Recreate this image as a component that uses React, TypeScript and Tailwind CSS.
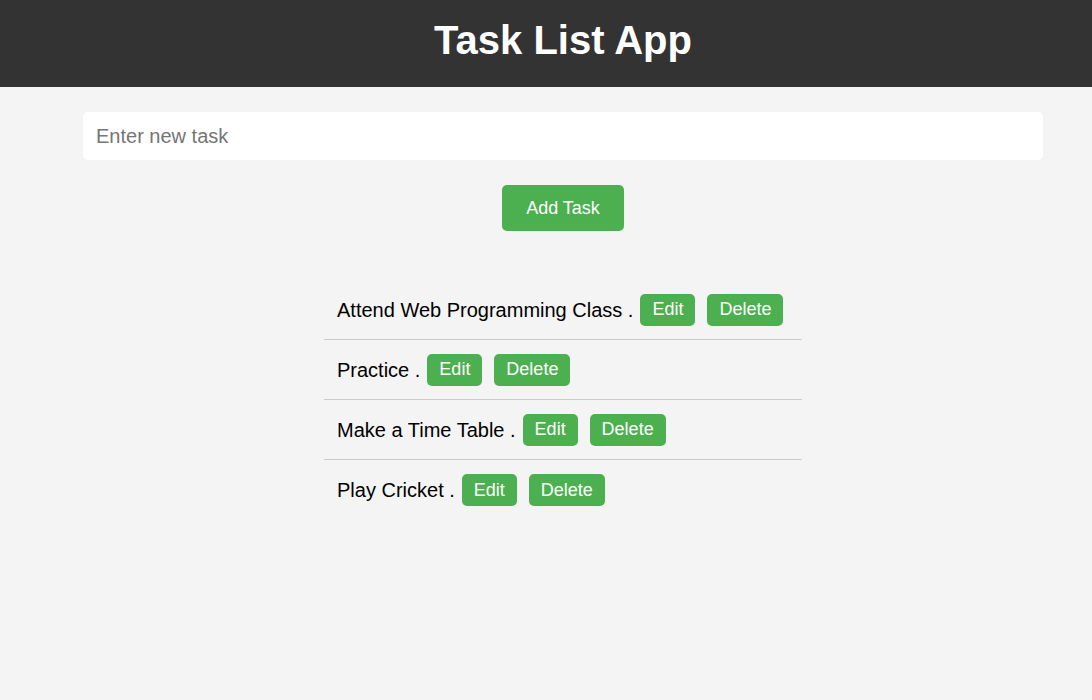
import { useState } from "react";

const initialTasks = [
  "Attend Web Programming Class",
  "Practice",
  "Make a Time Table",
  "Play Cricket",
];

export default function App() {
  const [tasks] = useState(initialTasks);

  return (
    <div className="min-h-[700px] bg-[#f4f4f4] font-['Liberation_Sans',Arial,sans-serif] text-black">
      {/* Header */}
      <header className="flex h-[87px] items-center bg-[#333333] pb-[7px] pl-[34px]">
        <h1 className="w-full text-center text-[40px] font-bold leading-none text-white">
          Task List App
        </h1>
      </header>

      <div className="flex flex-col items-center pl-[34px]">
        <input
          type="text"
          placeholder="Enter new task"
          className="mt-[25px] h-[48px] w-[960px] rounded-[5px] bg-white px-[13px] text-[20px] outline-none placeholder:text-[#757575]"
        />

        <button className="mt-[25px] h-[46px] w-[122px] rounded-[5px] bg-[#4caf50] text-[18px] text-white">
          Add Task
        </button>

        {/* Task list */}
        <ul className="mt-[49px] w-[478px]">
          {tasks.map((task, i) => (
            <li
              key={task}
              className={`flex h-[60px] items-center px-[13px] ${
                i < tasks.length - 1 ? "border-b border-[#cccccc]" : ""
              }`}
            >
              <span className="text-[20px] leading-none">{task} .</span>
              <button className="ml-[7px] h-[32px] w-[55px] rounded-[5px] bg-[#4caf50] text-[18px] text-white">
                Edit
              </button>
              <button className="ml-[12px] h-[32px] w-[76px] rounded-[5px] bg-[#4caf50] text-[18px] text-white">
                Delete
              </button>
            </li>
          ))}
        </ul>
      </div>
    </div>
  );
}
